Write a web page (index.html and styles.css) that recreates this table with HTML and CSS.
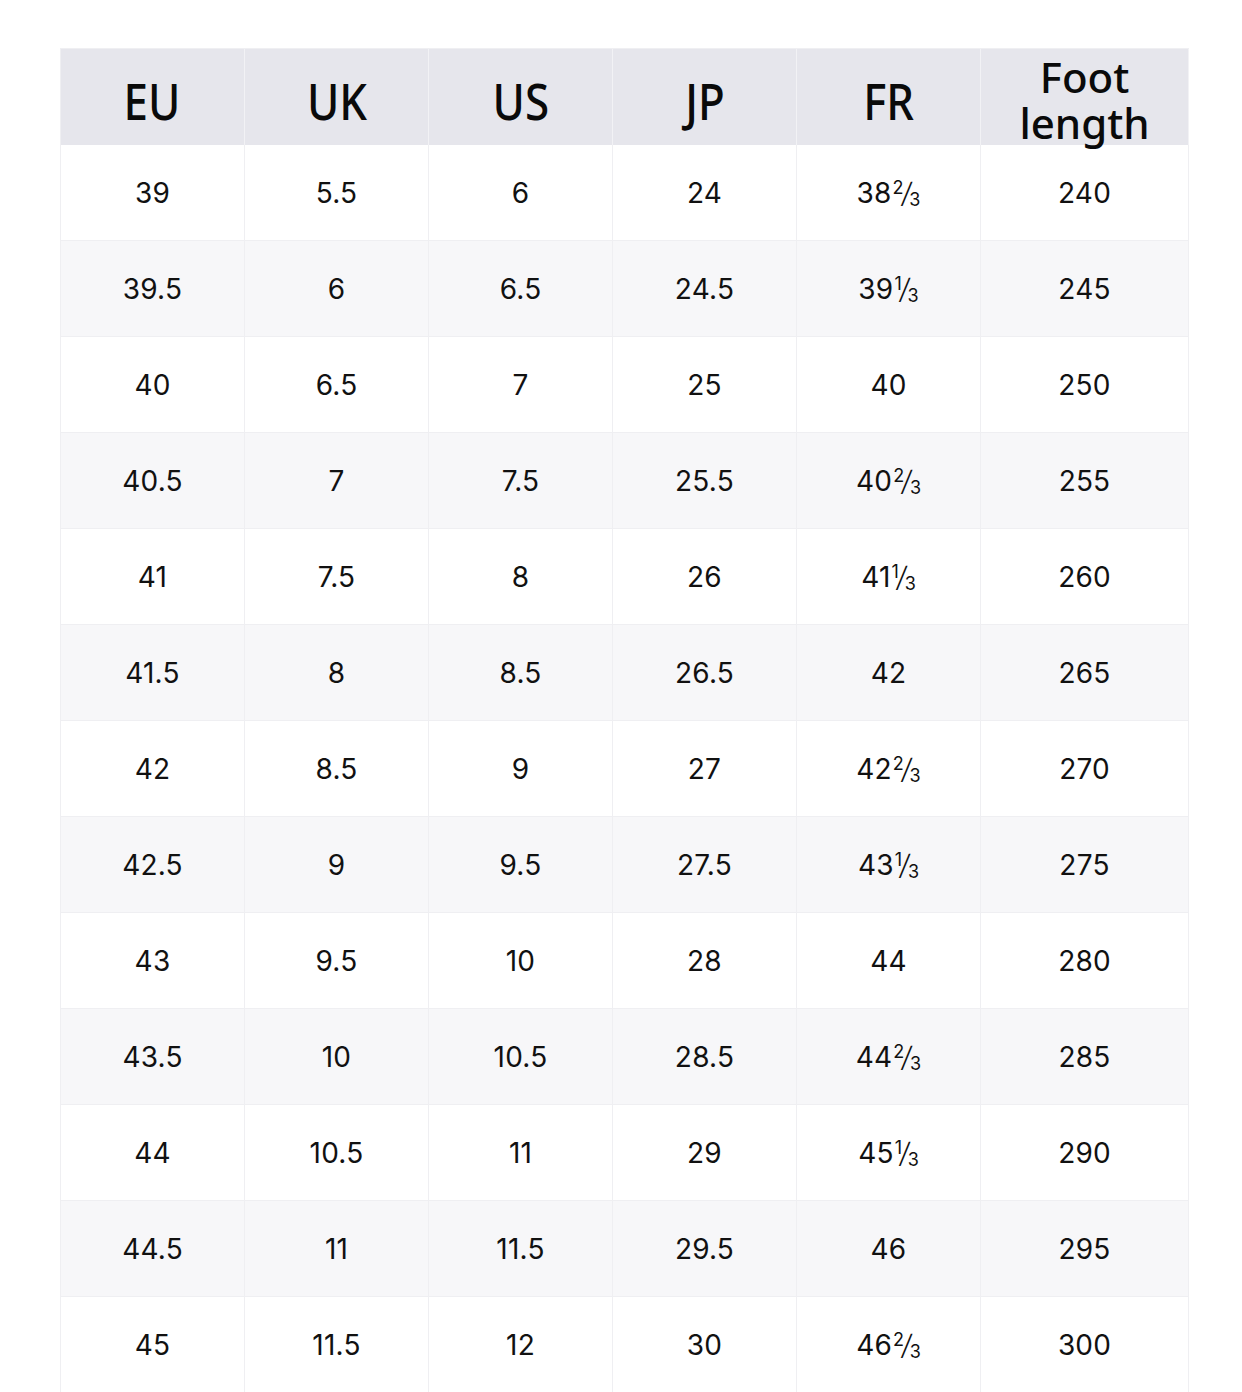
FILE: index.html
```html
<!DOCTYPE html>
<html lang="en">
<head>
<meta charset="utf-8">
<title>Size chart</title>
<link rel="stylesheet" href="styles.css">
</head>
<body>
<div class="chart">
  <div class="hd"><span class="hd-t">EU</span></div><div class="hd"><span class="hd-t">UK</span></div><div class="hd"><span class="hd-t">US</span></div><div class="hd"><span class="hd-t">JP</span></div><div class="hd"><span class="hd-t">FR</span></div><div class="hd hd-two">Foot<br>length</div>

  <div class="c">39</div><div class="c">5.5</div><div class="c">6</div><div class="c">24</div><div class="c">38<span class="fr"><span class="num">2</span><span class="sl">/</span><span class="den">3</span></span></div><div class="c">240</div>
  <div class="c alt">39.5</div><div class="c alt">6</div><div class="c alt">6.5</div><div class="c alt">24.5</div><div class="c alt">39<span class="fr"><span class="num">1</span><span class="sl">/</span><span class="den">3</span></span></div><div class="c alt">245</div>
  <div class="c">40</div><div class="c">6.5</div><div class="c">7</div><div class="c">25</div><div class="c">40</div><div class="c">250</div>
  <div class="c alt">40.5</div><div class="c alt">7</div><div class="c alt">7.5</div><div class="c alt">25.5</div><div class="c alt">40<span class="fr"><span class="num">2</span><span class="sl">/</span><span class="den">3</span></span></div><div class="c alt">255</div>
  <div class="c">41</div><div class="c">7.5</div><div class="c">8</div><div class="c">26</div><div class="c">41<span class="fr"><span class="num">1</span><span class="sl">/</span><span class="den">3</span></span></div><div class="c">260</div>
  <div class="c alt">41.5</div><div class="c alt">8</div><div class="c alt">8.5</div><div class="c alt">26.5</div><div class="c alt">42</div><div class="c alt">265</div>
  <div class="c">42</div><div class="c">8.5</div><div class="c">9</div><div class="c">27</div><div class="c">42<span class="fr"><span class="num">2</span><span class="sl">/</span><span class="den">3</span></span></div><div class="c">270</div>
  <div class="c alt">42.5</div><div class="c alt">9</div><div class="c alt">9.5</div><div class="c alt">27.5</div><div class="c alt">43<span class="fr"><span class="num">1</span><span class="sl">/</span><span class="den">3</span></span></div><div class="c alt">275</div>
  <div class="c">43</div><div class="c">9.5</div><div class="c">10</div><div class="c">28</div><div class="c">44</div><div class="c">280</div>
  <div class="c alt">43.5</div><div class="c alt">10</div><div class="c alt">10.5</div><div class="c alt">28.5</div><div class="c alt">44<span class="fr"><span class="num">2</span><span class="sl">/</span><span class="den">3</span></span></div><div class="c alt">285</div>
  <div class="c">44</div><div class="c">10.5</div><div class="c">11</div><div class="c">29</div><div class="c">45<span class="fr"><span class="num">1</span><span class="sl">/</span><span class="den">3</span></span></div><div class="c">290</div>
  <div class="c alt">44.5</div><div class="c alt">11</div><div class="c alt">11.5</div><div class="c alt">29.5</div><div class="c alt">46</div><div class="c alt">295</div>
  <div class="c">45</div><div class="c">11.5</div><div class="c">12</div><div class="c">30</div><div class="c">46<span class="fr"><span class="num">2</span><span class="sl">/</span><span class="den">3</span></span></div><div class="c">300</div>
</div>
</body>
</html>
```
FILE: styles.css
```css
html, body {
  margin: 0;
  padding: 0;
  background: #ffffff;
}

body {
  padding: 48px 0 0 60px;
  color: #111111;
}

.chart {
  display: grid;
  grid-template-columns: repeat(5, 184px) 208px;
  grid-auto-rows: 96px;
  width: max-content;
  border-left: 1px solid #efeff2;
  border-top: 1px solid #efeff2;
}

.chart > div {
  box-sizing: border-box;
  border-right: 1px solid #efeff2;
  border-bottom: 1px solid #efeff2;
  display: flex;
  align-items: center;
  justify-content: center;
  text-align: center;
}

.hd {
  background: #e6e6ec;
  font-family: "Noto Sans", "Open Sans", sans-serif;
  font-size: 51px;
  font-weight: 500;
  padding-top: 6px;
  color: #0a0a0a;
}

.hd-t {
  display: inline-block;
  transform: scaleX(0.86);
}

.chart > .hd {
  border-right-color: #f2f2f5;
  border-bottom: none;
}

.chart > .hd-two {
  font-size: 42px;
  line-height: 46px;
  padding-top: 6px;
}

.c {
  font-family: Inter, "Noto Sans", sans-serif;
  font-size: 28px;
  font-weight: 400;
  letter-spacing: 0.2px;
  color: #111111;
}

.alt {
  background: #f7f7f9;
}

.fr {
  display: inline-block;
  letter-spacing: 0;
  margin-left: 1px;
}

.num,
.den {
  font-size: 18px;
}

.num {
  vertical-align: 9px;
}

.den {
  vertical-align: -3px;
}

.sl {
  display: inline-block;
  font-size: 28px;
  font-weight: 300;
  margin: 0 -2px;
  transform: skewX(-8deg);
}
```
